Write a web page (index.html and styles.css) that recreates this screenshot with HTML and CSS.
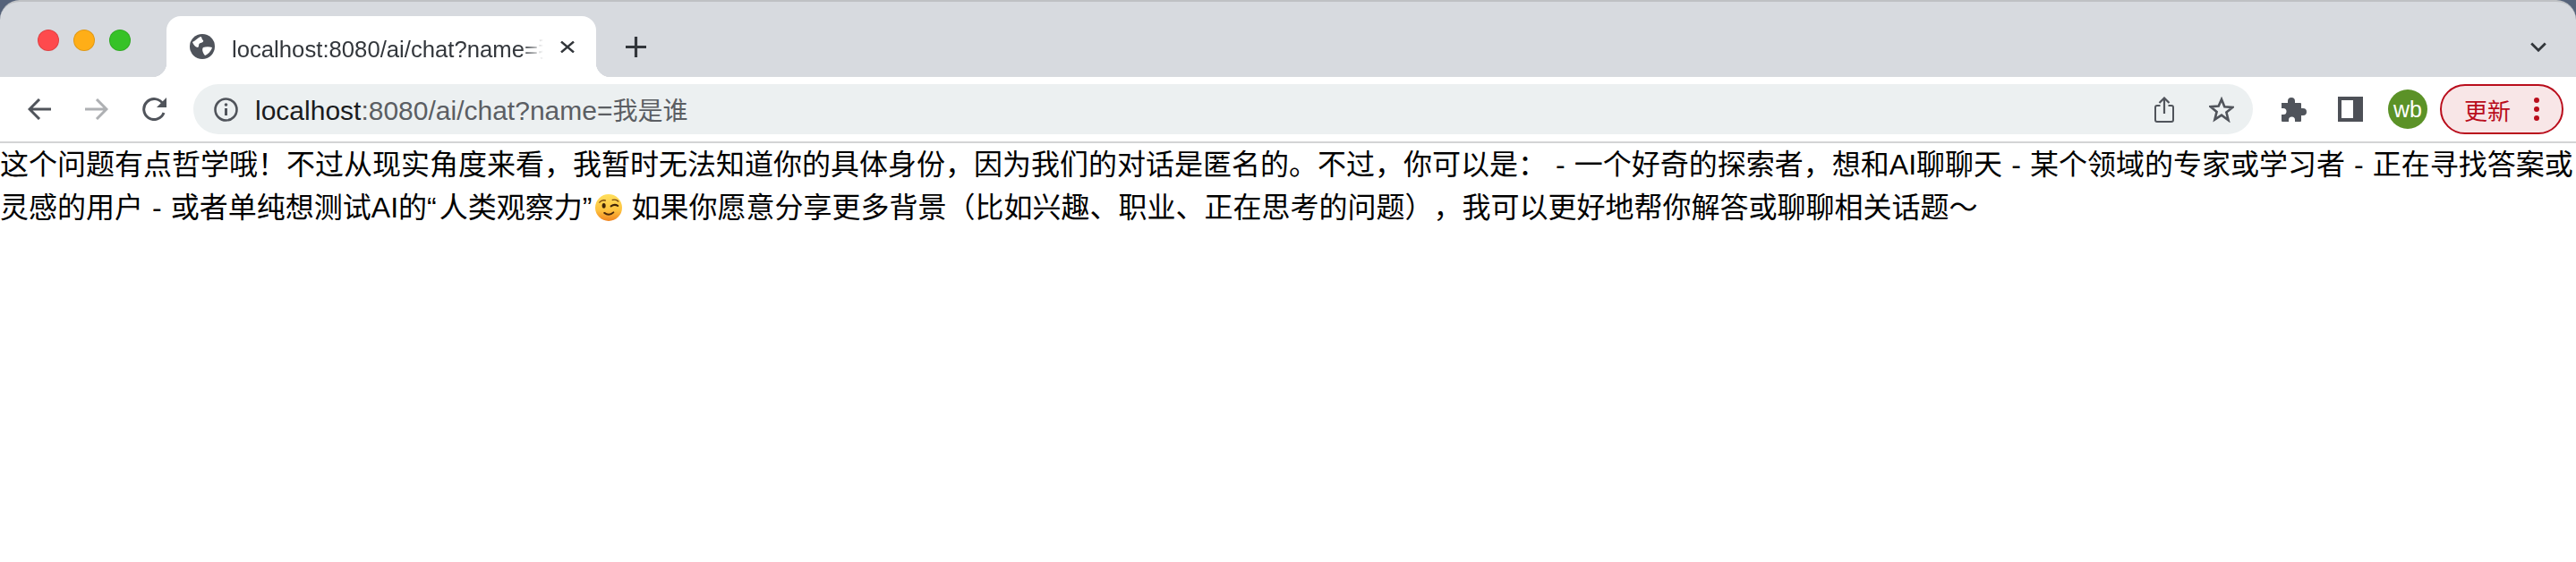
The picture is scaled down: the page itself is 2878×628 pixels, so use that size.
FILE: index.html
```html
<!DOCTYPE html>
<html lang="zh-CN">
<head>
<meta charset="utf-8">
<title>localhost:8080/ai/chat?name=我是谁</title>
<link rel="stylesheet" href="styles.css">
</head>
<body>
<div class="window">
  <header class="tabstrip">
    <div class="lights">
      <span class="light red"></span>
      <span class="light amber"></span>
      <span class="light green"></span>
    </div>
    <div class="tab">
      <svg class="globe" width="28" height="28" viewBox="0 0 28 28"><circle cx="14" cy="14" r="14" fill="#4f535b"/><path d="M3 9c3-1 6-5 9-6 2 0 1 3 3 4 1 2-2 3-3 3-3 1-1 4-3 5-2 0-5-3-6-6zM15 15c3-1 7-1 10 0-1 4-5 8-8 9-2-2-4-7-2-9z" fill="#fff"/></svg>
      <span class="tab-title">localhost:8080/ai/chat?name=我是谁</span>
      <svg class="tab-close" width="16" height="13" viewBox="0 0 16 13"><path d="M1 .5l14 12M15 .5L1 12.5" stroke="#32363b" stroke-width="2.4" fill="none"/></svg>
    </div>
    <svg class="new-tab" width="23" height="23" viewBox="0 0 23 23"><path d="M11.5 0v23M0 11.5h23" stroke="#32363b" stroke-width="3.2" fill="none"/></svg>
    <svg class="tab-list" width="18" height="11" viewBox="0 0 18 11"><path d="M1.2 1.5L9 9.2l7.8-7.7" stroke="#32363b" stroke-width="2.8" fill="none"/></svg>
  </header>
  <nav class="toolbar">
    <svg class="nav back" width="26" height="24" viewBox="0 0 26 24"><path d="M26 12H2M13 1L2 12l11 11" stroke="#50545b" stroke-width="3" fill="none"/></svg>
    <svg class="nav forward" width="26" height="24" viewBox="0 0 26 24"><path d="M0 12h24M13 1l11 11-11 11" stroke="#aeb0b3" stroke-width="3" fill="none"/></svg>
    <svg class="nav reload" width="27" height="26" viewBox="0 0 27 26"><path d="M24 17a11.500 11.500 0 1 1-1-10" stroke="#50545b" stroke-width="3" fill="none"/><path d="M27 0v11H16z" fill="#50545b"/></svg>
    <div class="omnibox">
      <svg class="info" width="27" height="27" viewBox="0 0 27 27"><circle cx="13.500" cy="13.500" r="12" fill="none" stroke="#50545b" stroke-width="2.600"/><path d="M13.500 12v8" stroke="#50545b" stroke-width="3"/><circle cx="13.500" cy="8" r="1.800" fill="#50545b"/></svg>
      <div class="url"><span class="host">localhost</span>:8080/ai/chat?name=<span class="url-cjk">我是谁</span></div>
      <svg class="share" width="22" height="29" viewBox="0 0 22 29"><path d="M6.500 10H3a2 2 0 0 0-2 2v14a2 2 0 0 0 2 2h16a2 2 0 0 0 2-2V12a2 2 0 0 0-2-2h-3.500" fill="none" stroke="#50545b" stroke-width="2"/><path d="M11 19V2M5.500 7L11 1.500 16.500 7" fill="none" stroke="#50545b" stroke-width="2.200"/></svg>
      <svg class="star" width="28" height="29" viewBox="0 0 28 29"><path d="M14 3l3.300 8.300 9 .6-6.900 5.700 2.200 8.700L14 20.700l-7.600 4.900 2.200-8.700-6.900-5.700 9-.6z" fill="none" stroke="#50545b" stroke-width="2.600"/></svg>
    </div>
    <svg class="puzzle" width="29" height="29" viewBox="0 0 29 29"><path d="M1 7h7V5a4 4 0 0 1 8 0v2h6a1 1 0 0 1 1 1v5h2a4 4 0 0 1 0 8h-2v6a1 1 0 0 1-1 1h-6v-2a3.500 3.500 0 0 0-7 0v2H2a1 1 0 0 1-1-1v-7h2a3.500 3.500 0 0 0 0-7H1z" fill="#50545b"/></svg>
    <svg class="sidebar" width="28" height="28" viewBox="0 0 28 28"><path d="M0 0h28v28H0zM4 4v20h13V4z" fill="#4d5057" fill-rule="evenodd"/></svg>
    <div class="avatar">wb</div>
    <div class="update">
      <span class="update-label">更新</span>
      <svg class="kebab" width="6" height="26" viewBox="0 0 6 26"><circle cx="3" cy="3" r="3"/><circle cx="3" cy="13" r="3"/><circle cx="3" cy="23" r="3"/></svg>
    </div>
  </nav>
  <main class="page">这个问题有点哲学哦！不过从现实角度来看，我暂时无法知道你的具体身份，因为我们的对话是匿名的。不过，你可以是： - 一个好奇的探索者，想和AI聊聊天 - 某个领域的专家或学习者 - 正在寻找答案或灵感的用户 - 或者单纯想测试AI的<span class="quote">“</span>人类观察力<span class="quote">”</span><svg class="emoji" width="30" height="30" viewBox="0 0 28 28"><defs><linearGradient id="face" x1="0" y1="0" x2="0" y2="1"><stop offset="0" stop-color="#ffdf5c"/><stop offset=".6" stop-color="#fdc23f"/><stop offset="1" stop-color="#f0841f"/></linearGradient></defs><circle cx="14" cy="14" r="14" fill="url(#face)"/><path d="M4.500 8.500q2.500-3 6-2M18 6q4-1 6 1.500" fill="none" stroke="#7a4a12" stroke-width="1.300" stroke-linecap="round"/><ellipse cx="9" cy="12" rx="1.900" ry="2.700" fill="#3f2408"/><path d="M16.500 12.500q3.500-2.500 7-.5" fill="none" stroke="#3f2408" stroke-width="2" stroke-linecap="round"/><path d="M9.500 19.500q5 3.500 9.500-.5" fill="none" stroke="#4a2a0a" stroke-width="1.800" stroke-linecap="round"/></svg> 如果你愿意分享更多背景（比如兴趣、职业、正在思考的问题），我可以更好地帮你解答或聊聊相关话题～</main>
</div>
</body>
</html>
```
FILE: styles.css
```css
* { box-sizing: border-box; }
html, body { margin: 0; padding: 0; background: #fff; }
body { font-family: "Liberation Sans", "Noto Sans CJK SC", sans-serif; }
.window { background: #56637a; }
.tabstrip {
  display: flex;
  align-items: flex-start;
  height: 86px;
  padding: 16px 0 0 42px;
  background: #d7dadf;
  border-top: 2px solid #bfc1c4;
  border-radius: 22px 22px 0 0;
}
.lights { display: flex; gap: 16px; margin-top: 15px; width: 144px; }
.light { width: 24px; height: 24px; border-radius: 50%; border: 1px solid rgba(0,0,0,.12); }
.red { background: #fe4a4d; }
.amber { background: #ffae17; }
.green { background: #36c227; }
.tab {
  position: relative;
  display: flex;
  align-items: center;
  width: 480px;
  height: 68px;
  padding: 0 24px 0 26px;
  background: #fff;
  border-radius: 16px 16px 0 0;
}
.tab::before, .tab::after {
  content: "";
  position: absolute;
  bottom: 0;
  width: 16px;
  height: 16px;
}
.tab::before { left: -16px; background: radial-gradient(circle at 0 0, transparent 16px, #fff 16.5px); }
.tab::after { right: -16px; background: radial-gradient(circle at 100% 0, transparent 16px, #fff 16.5px); }
.globe { flex: none; }
.tab-title {
  width: 348px;
  margin-left: 19px;
  margin-right: 19px;
  overflow: hidden;
  white-space: nowrap;
  font-size: 25.700px;
  color: #33373c;
  -webkit-mask-image: linear-gradient(to right, #000 93%, transparent 100%);
  mask-image: linear-gradient(to right, #000 93%, transparent 100%);
}
.tab-close { flex: none; }
.new-tab { flex: none; margin: 23px 0 0 33px; }
.tab-list { flex: none; margin: 29px 33px 0 auto; }
.toolbar {
  display: flex;
  align-items: center;
  height: 74px;
  padding: 0 14px 0 31px;
  background: #fff;
  border-bottom: 2px solid #d3d4d5;
}
.forward { margin-left: 38px; }
.reload { margin-left: 38px; }
.omnibox {
  display: flex;
  align-items: center;
  flex: none;
  width: 2301px;
  height: 56px;
  margin-left: 30px;
  padding: 0 21px 0 23px;
  background: #ecf0f1;
  border-radius: 28px;
}
.url {
  flex: 1;
  margin-left: 19px;
  font-size: 30px;
  color: #5b5e63;
  white-space: nowrap;
}
.url-cjk { font-size: 28px; }
.host { color: #1a1b1d; }
.star { margin-left: 39px; }
.puzzle { flex: none; margin-left: 31px; }
.sidebar { flex: none; margin-left: 35px; }
.avatar {
  flex: none;
  display: flex;
  align-items: center;
  justify-content: center;
  width: 44px;
  height: 44px;
  margin-left: 28px;
  border-radius: 50%;
  background: #5b9227;
  color: #fff;
  font-size: 25px;
}
.update {
  flex: none;
  display: flex;
  align-items: center;
  width: 138px;
  height: 56px;
  margin-left: 14px;
  padding: 0 25px;
  border: 2px solid #b90d1c;
  border-radius: 28px;
  background: #f8e6e7;
  color: #b90d1c;
}
.update-label { font-size: 26px; white-space: nowrap; }
.kebab { margin-left: auto; fill: #b90d1c; }
.page {
  font-size: 32px;
  line-height: 48px;
  color: #000;
  background: #fff;
  min-height: 468px;
  word-spacing: 1.200px;
  text-spacing-trim: space-all;
}
.quote { letter-spacing: 3px; }
.emoji { margin: 0 0 0 1px; vertical-align: -4px; }
```
